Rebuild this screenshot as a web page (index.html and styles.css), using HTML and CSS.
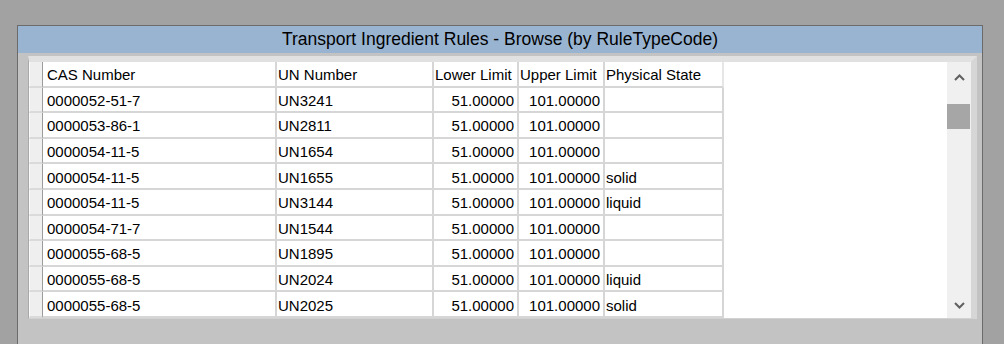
FILE: index.html
```html
<!DOCTYPE html>
<html lang="en">
  <head>
    <meta charset="UTF-8" />
    <meta name="viewport" content="width=device-width, initial-scale=1.0" />
    <title>Transport Ingredient Rules - Browse</title>
    <link rel="stylesheet" href="styles.css">
  </head>
  <body>
    <div class="window">
      <div class="titlebar">Transport Ingredient Rules - Browse (by RuleTypeCode)</div>
      <div class="body">
        <div class="grid">
          <div class="rows">
            <div class="row header">
              <div class="cell sel"></div>
              <div class="cell cas">CAS Number</div>
              <div class="cell un">UN Number</div>
              <div class="cell lower">Lower Limit</div>
              <div class="cell upper">Upper Limit</div>
              <div class="cell state">Physical State</div>
              <div class="cell filler"></div>
            </div>
            <div class="row">
              <div class="cell sel"></div>
              <div class="cell cas">0000052-51-7</div>
              <div class="cell un">UN3241</div>
              <div class="cell lower num">51.00000</div>
              <div class="cell upper num">101.00000</div>
              <div class="cell state"></div>
              <div class="cell filler"></div>
            </div>
            <div class="row">
              <div class="cell sel"></div>
              <div class="cell cas">0000053-86-1</div>
              <div class="cell un">UN2811</div>
              <div class="cell lower num">51.00000</div>
              <div class="cell upper num">101.00000</div>
              <div class="cell state"></div>
              <div class="cell filler"></div>
            </div>
            <div class="row">
              <div class="cell sel"></div>
              <div class="cell cas">0000054-11-5</div>
              <div class="cell un">UN1654</div>
              <div class="cell lower num">51.00000</div>
              <div class="cell upper num">101.00000</div>
              <div class="cell state"></div>
              <div class="cell filler"></div>
            </div>
            <div class="row">
              <div class="cell sel"></div>
              <div class="cell cas">0000054-11-5</div>
              <div class="cell un">UN1655</div>
              <div class="cell lower num">51.00000</div>
              <div class="cell upper num">101.00000</div>
              <div class="cell state">solid</div>
              <div class="cell filler"></div>
            </div>
            <div class="row">
              <div class="cell sel"></div>
              <div class="cell cas">0000054-11-5</div>
              <div class="cell un">UN3144</div>
              <div class="cell lower num">51.00000</div>
              <div class="cell upper num">101.00000</div>
              <div class="cell state">liquid</div>
              <div class="cell filler"></div>
            </div>
            <div class="row">
              <div class="cell sel"></div>
              <div class="cell cas">0000054-71-7</div>
              <div class="cell un">UN1544</div>
              <div class="cell lower num">51.00000</div>
              <div class="cell upper num">101.00000</div>
              <div class="cell state"></div>
              <div class="cell filler"></div>
            </div>
            <div class="row">
              <div class="cell sel"></div>
              <div class="cell cas">0000055-68-5</div>
              <div class="cell un">UN1895</div>
              <div class="cell lower num">51.00000</div>
              <div class="cell upper num">101.00000</div>
              <div class="cell state"></div>
              <div class="cell filler"></div>
            </div>
            <div class="row">
              <div class="cell sel"></div>
              <div class="cell cas">0000055-68-5</div>
              <div class="cell un">UN2024</div>
              <div class="cell lower num">51.00000</div>
              <div class="cell upper num">101.00000</div>
              <div class="cell state">liquid</div>
              <div class="cell filler"></div>
            </div>
            <div class="row">
              <div class="cell sel"></div>
              <div class="cell cas">0000055-68-5</div>
              <div class="cell un">UN2025</div>
              <div class="cell lower num">51.00000</div>
              <div class="cell upper num">101.00000</div>
              <div class="cell state">solid</div>
              <div class="cell filler"></div>
            </div>
          </div>

          <div class="scrollbar">
            <div class="sb-btn sb-up">
              <svg width="11" height="7" viewBox="0 0 11 7"><path d="M1 6 L5.5 1.5 L10 6" fill="none" stroke="#606060" stroke-width="2"/></svg>
            </div>
            <div class="sb-track">
              <div class="sb-thumb"></div>
            </div>
            <div class="sb-btn sb-down">
              <svg width="11" height="7" viewBox="0 0 11 7"><path d="M1 1 L5.5 5.5 L10 1" fill="none" stroke="#606060" stroke-width="2"/></svg>
            </div>
          </div>
        </div>
      </div>
    </div>
  </body>
</html>
```

FILE: styles.css
```css
body {
  margin: 0;
  height: 344px;
  overflow: hidden;
  background-color: #a2a2a2;
  font-family: "Liberation Sans", Arial, sans-serif;
  color: #000;
}

.window {
  margin: 25px 0 0 17px;
  width: 964px;
  height: 319px;
  border: 1px solid #6b6b6b;
  border-bottom: none;
  background-color: #c3c3c3;
}

.titlebar {
  height: 27px;
  line-height: 27px;
  background-color: #99b4d1;
  text-align: center;
  font-size: 17.5px;
}

.body {
  padding: 3px 5px 0 10px;
}

.grid {
  display: flex;
  width: 942px;
  border-left: 1px solid #a9a9a9;
  border-top: 6px solid #e1e1e1;
  border-right: 6px solid #d6d6d6;
  border-bottom: 1px solid #d2d2d2;
  background-color: #fff;
}

.rows {
  flex: 1;
}

.row {
  display: flex;
  height: 25.6px;
  font-size: 15px;
}

.cell {
  box-sizing: border-box;
  display: flex;
  align-items: center;
  white-space: nowrap;
  overflow: hidden;
  border-right: 2px solid #d6d6d6;
  border-bottom: 2px solid #d6d6d6;
  padding-left: 1px;
  padding-top: 2px;
}

.sel {
  width: 14px;
  padding: 0;
  background-color: #efefef;
  border-left: 1px solid #fbfbfb;
  border-right: 1px solid #9c9c9c;
  border-bottom: 2px solid #dadada;
}

.cas {
  width: 234px;
  padding-left: 4px;
}

.un {
  width: 157px;
}

.lower {
  width: 85px;
}

.upper {
  width: 86px;
}

.state {
  width: 119px;
}

.num {
  justify-content: flex-end;
  padding-right: 3px;
}

.header .state {
  border-right-color: #e6e6e6;
}

.filler {
  flex: 1;
  border: none;
}

.scrollbar {
  display: flex;
  flex-direction: column;
  width: 24px;
  background-color: #f0f0f0;
}

.sb-btn {
  display: flex;
  align-items: center;
  justify-content: center;
}

.sb-up {
  height: 30px;
}

.sb-down {
  height: 25px;
}

.sb-track {
  flex: 1;
  padding-top: 12px;
}

.sb-thumb {
  width: 23px;
  height: 25px;
  background-color: #a6a6a6;
}
```
